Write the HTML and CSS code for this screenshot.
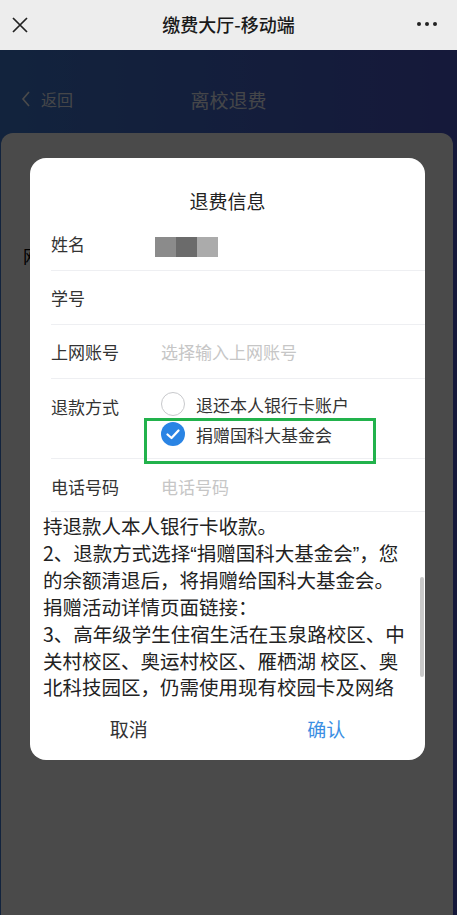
FILE: index.html
```html
<!DOCTYPE html>
<html lang="zh-CN">
<head>
<meta charset="utf-8">
<link rel="stylesheet" href="styles.css">
</head>
<body>

<div class="navbar">
  <svg class="nav-close" width="16" height="16" viewBox="0 0 16 16">
    <path d="M1 1 L15 15 M15 1 L1 15" stroke="#222" stroke-width="1.7" fill="none"/>
  </svg>
  <div class="nav-title">缴费大厅-移动端</div>
  <div class="nav-more"><i></i><i></i><i></i></div>
</div>

<div class="webview">
  <div class="page-head">
    <div class="back">
      <svg width="10" height="16" viewBox="0 0 10 16"><path d="M8 1 L2 8 L8 15" stroke="#fff" stroke-width="1.6" fill="none"/></svg>
      <span>返回</span>
    </div>
    <div class="page-title">离校退费</div>
    <div></div>
  </div>

  <div class="page-card">
    <p class="card-text">网费</p>
  </div>

  <div class="mask"></div>

  <div class="dialog">
    <div class="dialog-title">退费信息</div>

    <div class="field">
      <div class="field-label">姓名</div>
      <div class="masked"><i class="m1"></i><i class="m2"></i><i class="m3"></i></div>
    </div>
    <div class="field">
      <div class="field-label">学号</div>
    </div>
    <div class="field">
      <div class="field-label">上网账号</div>
      <div class="placeholder">选择输入上网账号</div>
    </div>
    <div class="field field-radio">
      <div class="field-label">退款方式</div>
      <div class="radio-group">
        <div class="radio"><span class="radio-icon"></span>退还本人银行卡账户</div>
        <div class="radio"><span class="radio-icon checked">
          <svg width="24" height="24" viewBox="0 0 24 24"><path d="M6.5 12.5 L10.5 16 L17.5 8.5" stroke="#fff" stroke-width="2.3" fill="none" stroke-linecap="round" stroke-linejoin="round"/></svg>
        </span>捐赠国科大基金会</div>
      </div>
    </div>
    <div class="field field-last">
      <div class="field-label">电话号码</div>
      <div class="placeholder">电话号码</div>
    </div>

    <div class="notice">
      持退款人本人银行卡收款。<br>
      2、退款方式选择<span class="q">“</span>捐赠国科大基金会<span class="q">”</span>，您<br>
      的余额清退后，将捐赠给国科大基金会。<br>
      捐赠活动详情页面链接：<br>
      3、高年级学生住宿生活在玉泉路校区、中<br>
      关村校区、奥运村校区、雁栖湖 校区、奥<br>
      北科技园区，仍需使用现有校园卡及网络
      <div class="scroll-thumb"></div>
    </div>

    <div class="dialog-footer">
      <div class="btn">取消</div>
      <div class="btn btn-ok">确认</div>
    </div>

    <div class="highlight"></div>
  </div>
</div>

</body>
</html>
```

FILE: styles.css
```css
body {
  margin: 0;
  width: 457px;
  height: 915px;
  overflow: hidden;
  font-family: "Noto Sans CJK SC", "Noto Sans", sans-serif;
  background-color: #484848;
}

.navbar {
  height: 50px;
  background-color: #ededed;
  display: grid;
  grid-template-columns: 60px 1fr 60px;
  align-items: center;
  padding-bottom: 3px;
  box-sizing: border-box;
}

.nav-close {
  margin-left: 12px;
  margin-top: 3px;
}

.nav-title {
  text-align: center;
  font-size: 18px;
  font-weight: 500;
  color: #1a1a1a;
}

.nav-more {
  display: flex;
  justify-content: flex-end;
  gap: 4px;
  padding-right: 20px;
}

.nav-more i {
  width: 4px;
  height: 4px;
  border-radius: 50%;
  background-color: #222;
}

.webview {
  position: relative;
  height: 865px;
  display: flex;
  flex-direction: column;
  background: linear-gradient(90deg, #3f7ad2, #4a56c8);
}

.page-head {
  height: 83px;
  padding-top: 15px;
  box-sizing: border-box;
  display: grid;
  grid-template-columns: 1fr auto 1fr;
  align-items: center;
  color: rgba(255, 255, 255, 0.92);
}

.back {
  display: flex;
  align-items: center;
  gap: 10px;
  padding-left: 21px;
  font-size: 16px;
}

.page-title {
  font-size: 19px;
}

.page-card {
  flex: 1;
  margin: 0 4px 0 1px;
  background-color: #fff;
  border-radius: 12px 12px 0 0;
}

.card-text {
  margin: 113px 0 0 22px;
  font-size: 17px;
  line-height: 20px;
  color: #000;
}

.mask {
  position: absolute;
  inset: 0;
  background-color: rgba(0, 0, 0, 0.71);
}

.dialog {
  position: absolute;
  top: 108px;
  left: 30px;
  width: 395px;
  background-color: #fff;
  border-radius: 16px;
  overflow: hidden;
}

.dialog-title {
  height: 59px;
  padding-top: 30px;
  box-sizing: border-box;
  text-align: center;
  font-size: 19px;
  line-height: 26px;
  color: #222;
}

.field {
  display: flex;
  align-items: center;
  height: 54px;
  margin-left: 21px;
  border-bottom: 1px solid #eeeff2;
  box-sizing: border-box;
  font-size: 17px;
  color: #333;
}

.field-label {
  width: 110px;
  flex-shrink: 0;
}

.placeholder {
  color: #c6c6c6;
}

.masked {
  display: flex;
  margin: 7px 0 0 -6px;
}

.masked i {
  width: 21px;
  height: 20px;
}

.masked .m1 { background-color: #8b8b8b; }
.masked .m2 { background-color: #6b6b6b; }
.masked .m3 { background-color: #ababab; }

.field-radio {
  height: 80px;
  align-items: flex-start;
  padding-top: 10px;
}

.field-radio .field-label {
  padding-top: 3px;
  line-height: 30px;
}

.radio {
  display: flex;
  align-items: center;
  height: 30px;
  color: #333;
}

.radio-icon {
  width: 24px;
  height: 24px;
  box-sizing: border-box;
  border: 1px solid #c8c9cc;
  border-radius: 50%;
  margin-right: 11px;
}

.radio-icon.checked {
  border: none;
  background-color: #2a84e4;
}

.radio-icon svg {
  display: block;
}

.field-last {
  height: 53px;
  padding-top: 2px;
}

.notice {
  position: relative;
  height: 188px;
  overflow: hidden;
  padding: 1px 17px 0 13px;
  box-sizing: border-box;
  font-size: 19.5px;
  line-height: 26.7px;
  color: #222;
  white-space: nowrap;
}

.notice .q {
  font-family: "Liberation Sans", sans-serif;
}

.scroll-thumb {
  position: absolute;
  top: 65px;
  right: 1px;
  width: 4px;
  height: 100px;
  border-radius: 2px;
  background-color: #c9c9c9;
}

.dialog-footer {
  display: grid;
  grid-template-columns: 1fr 1fr;
  height: 60px;
  padding-bottom: 4px;
  box-sizing: border-box;
  align-items: center;
  font-size: 19px;
}

.btn {
  text-align: center;
  color: #333;
}

.btn-ok {
  color: #3c8fe3;
}

.highlight {
  position: absolute;
  top: 260px;
  left: 114px;
  width: 232px;
  height: 46px;
  box-sizing: border-box;
  border: 3px solid #22b24c;
}
```
